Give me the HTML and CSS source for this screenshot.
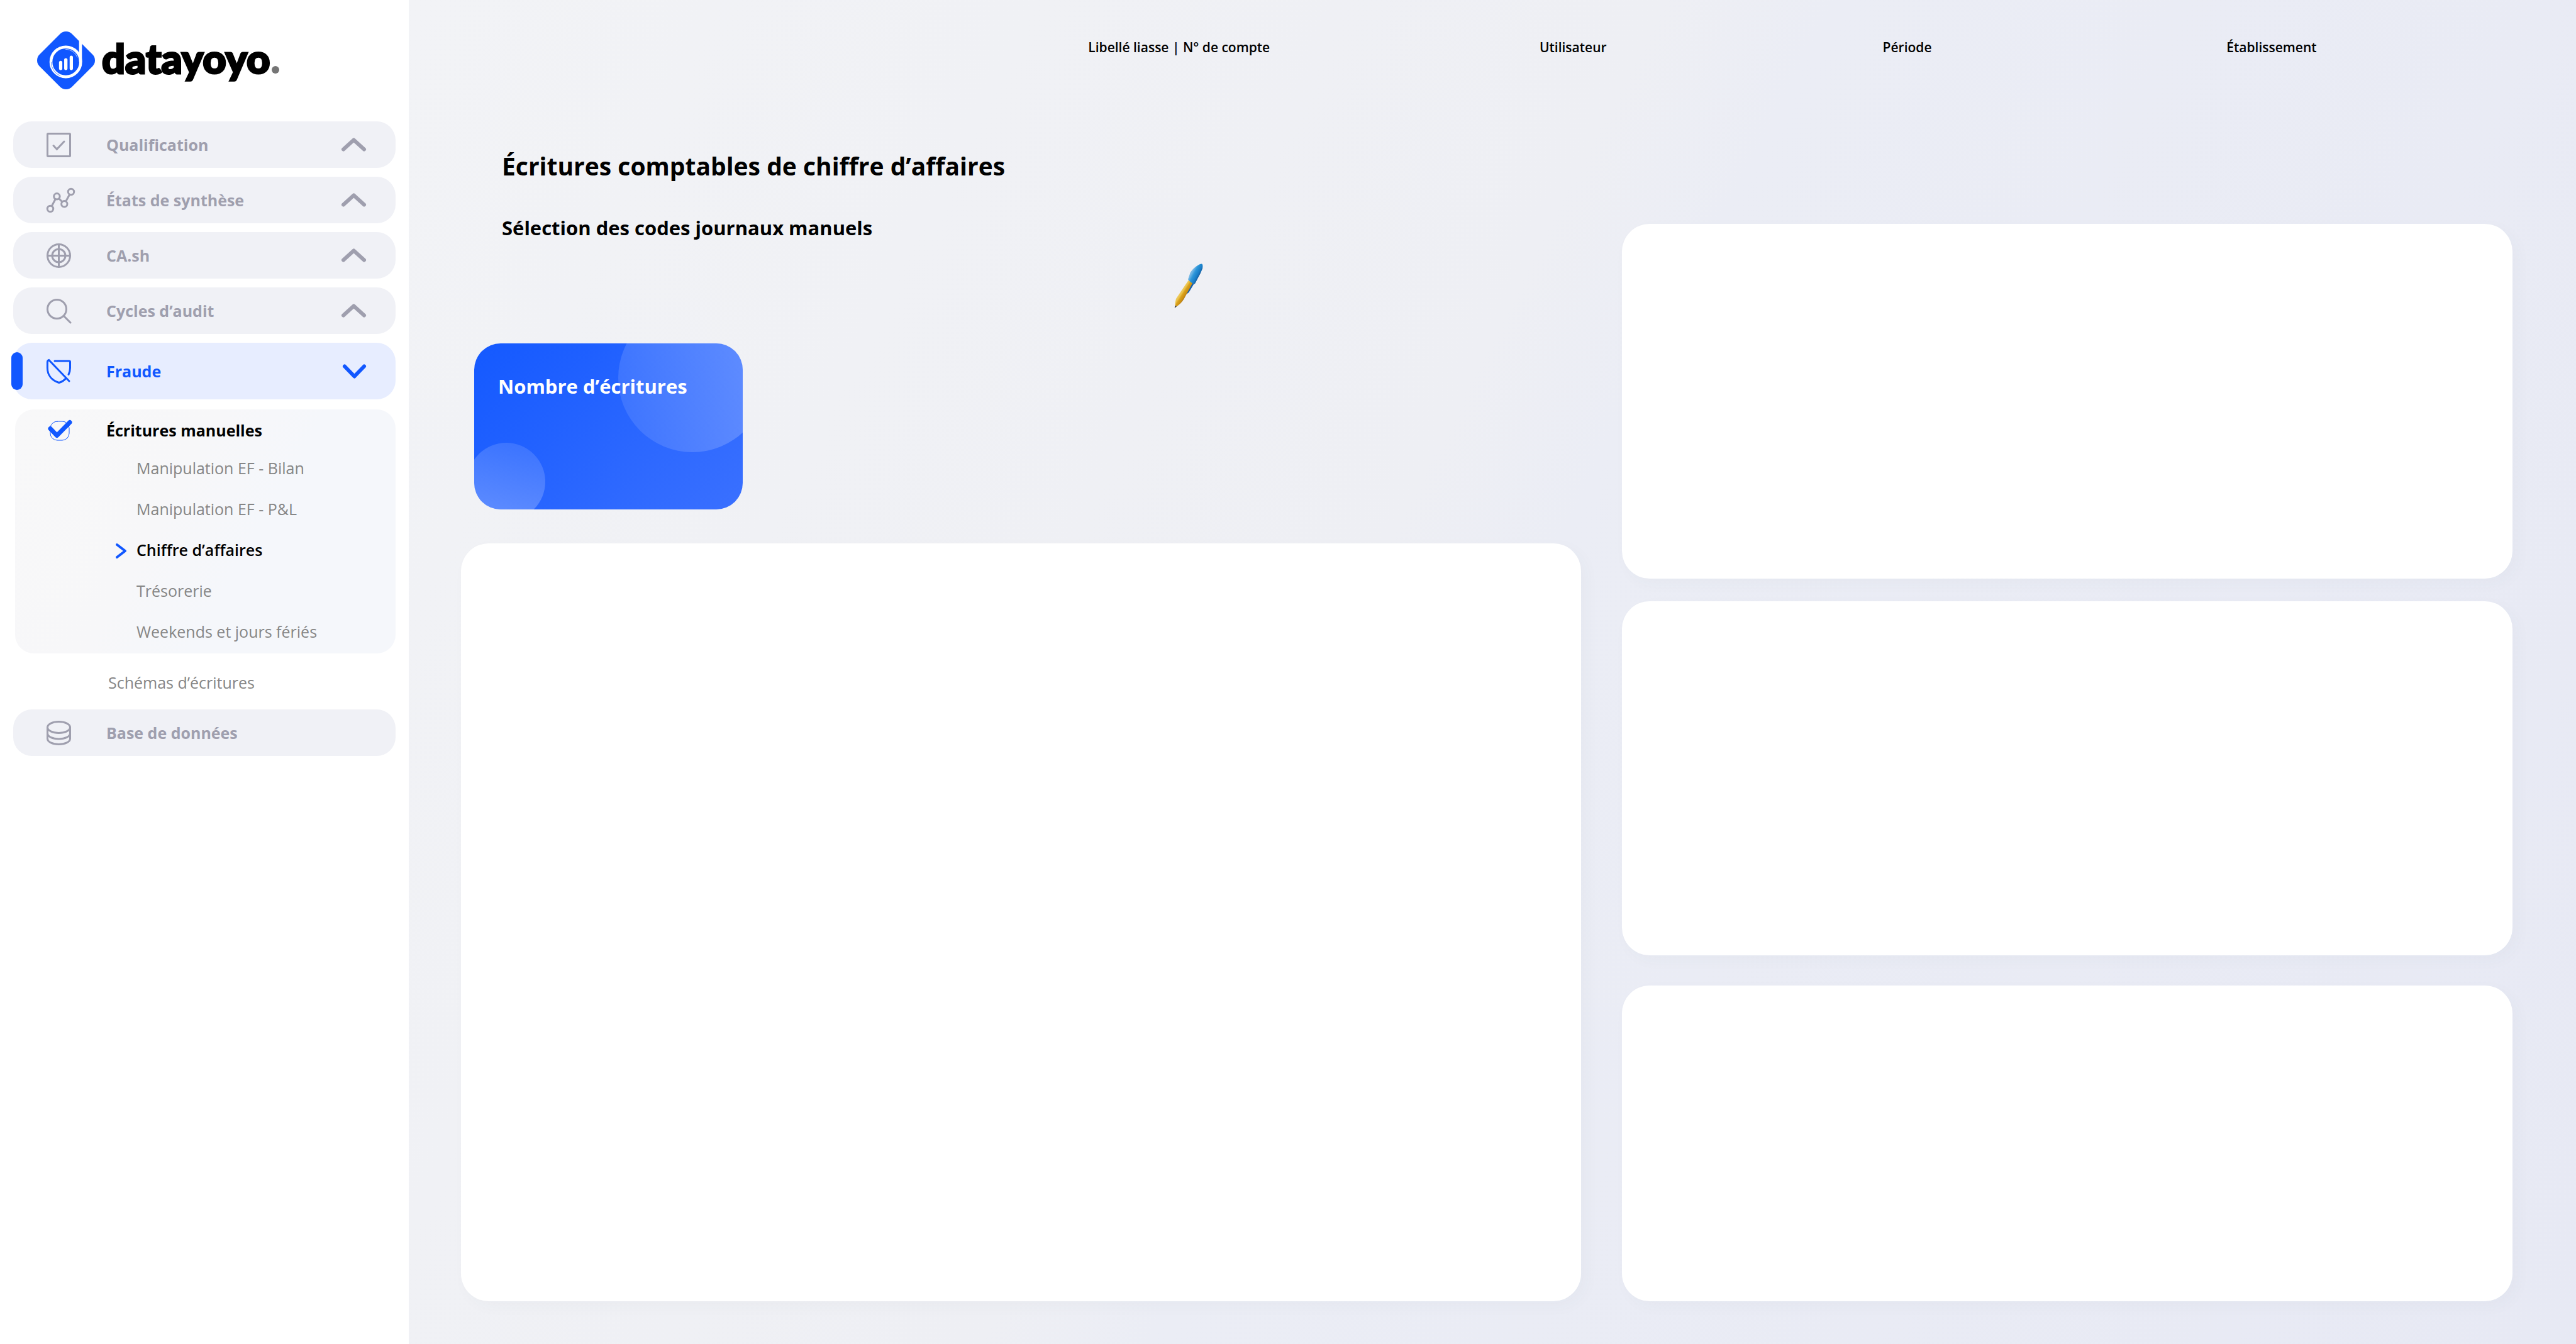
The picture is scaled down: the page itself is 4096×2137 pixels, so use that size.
FILE: index.html
```
<!DOCTYPE html>
<html lang="fr">
<head>
<meta charset="utf-8">
<title>Datayoyo – Écritures comptables de chiffre d’affaires</title>
<link rel="stylesheet" href="styles.css">
</head>
<body>
<div class="app">
  <aside class="sidebar">
    <a class="logo" href="#" aria-label="datayoyo">
      <svg class="logo-mark" viewBox="29 32 280 280" aria-hidden="true">
        <rect x="58" y="61" width="222" height="222" rx="41" fill="#1157ff" transform="rotate(45 169 172)"/>
        <path d="M232 40h14v140h-14z" fill="#fff"/>
        <circle cx="168" cy="179.500" r="72" fill="none" stroke="#fff" stroke-width="14"/>
        <path d="M97 180a73 73 0 0 0 44 67" fill="none" stroke="#1157ff" stroke-width="2"/>
        <path d="M166 118a62 62 0 0 1 58 40" fill="none" stroke="#fff" stroke-width="2"/>
        <path d="M143 182v29M168 169v42M194.500 157v54" stroke="#fff" stroke-width="16" stroke-linecap="round"/>
      </svg>
      <span class="logo-word">datayoyo</span><span class="logo-dot"></span>
    </a>
    <nav class="nav">
      <button class="nav-item" type="button">
        <svg class="icon" viewBox="0 0 39 39"><rect x="1.500" y="1.500" width="36" height="36" rx="1"/><path d="M11 20.500l5.400 5.700L28 14"/></svg>
        <span class="nav-label">Qualification</span>
        <svg class="chevron" viewBox="0 0 39 22"><path d="M3 18.500L19.500 3.500 36 18.500"/></svg>
      </button>
      <button class="nav-item" type="button">
        <svg class="icon" viewBox="0 0 39 39"><circle cx="6" cy="33" r="4.700"/><circle cx="16.400" cy="13.300" r="4.700"/><circle cx="28.300" cy="25.300" r="4.700"/><circle cx="39" cy="6" r="4.700"/><path d="M8.200 28.800l6-11.300M19.700 16.600l5.300 5.400M30.600 21.200l6.100-11"/></svg>
        <span class="nav-label">États de synthèse</span>
        <svg class="chevron" viewBox="0 0 39 22"><path d="M3 18.500L19.500 3.500 36 18.500"/></svg>
      </button>
      <button class="nav-item" type="button">
        <svg class="icon" viewBox="0 0 39 39"><circle cx="19.500" cy="19.500" r="18"/><circle cx="19.500" cy="19.500" r="10.500"/><path d="M19.500 1.500v36M1.500 19.500h36"/></svg>
        <span class="nav-label">CA.sh</span>
        <svg class="chevron" viewBox="0 0 39 22"><path d="M3 18.500L19.500 3.500 36 18.500"/></svg>
      </button>
      <button class="nav-item" type="button">
        <svg class="icon" viewBox="0 0 39 39"><circle cx="16.500" cy="16.500" r="15"/><path d="M27.300 27.300L38 38"/></svg>
        <span class="nav-label">Cycles d’audit</span>
        <svg class="chevron" viewBox="0 0 39 22"><path d="M3 18.500L19.500 3.500 36 18.500"/></svg>
      </button>
      <button class="nav-item nav-item-active" type="button" aria-expanded="true">
        <svg class="icon" viewBox="0 0 39 39"><path d="M36 35L3.800 1.500C2.400 2 1.400 3 1.400 5v9c0 12 7.600 20 18.400 23.500 5-1.500 8.700-4 11.400-7.500M13 3h23c1 0 1.500.5 1.500 1.500V14c0 4-1 7.500-2.500 10.500"/></svg>
        <span class="nav-label">Fraude</span>
        <svg class="chevron" viewBox="0 0 39 22"><path d="M5 3.500L20.500 19.500 36 3.500"/></svg>
      </button>
      <div class="submenu">
        <a class="submenu-head" href="#">
          <svg class="check" viewBox="0 0 39 39"><rect class="check-box" x="6" y="5" width="30" height="30" rx="11"/><path d="M6 16.500L16.500 27.500 37 6.500"/></svg>
          <span class="nav-label">Écritures manuelles</span>
        </a>
        <ul class="sublist">
          <li><a class="sublink" href="#">Manipulation EF - Bilan</a></li>
          <li><a class="sublink" href="#">Manipulation EF - P&amp;L</a></li>
          <li><a class="sublink sublink-current" href="#"><svg class="caret" viewBox="0 0 18 24"><path d="M2 2l13 10L2 22"/></svg>Chiffre d’affaires</a></li>
          <li><a class="sublink" href="#">Trésorerie</a></li>
          <li><a class="sublink" href="#">Weekends et jours fériés</a></li>
        </ul>
      </div>
      <a class="nav-link" href="#">Schémas d’écritures</a>
      <button class="nav-item" type="button">
        <svg class="icon" viewBox="0 0 39 39"><ellipse cx="19.500" cy="10.500" rx="18" ry="9"/><path d="M1.500 10.500v18c0 5 8 9 18 9s18-4 18-9v-18M1.500 20c0 5 8 9 18 9s18-4 18-9"/></svg>
        <span class="nav-label">Base de données</span>
      </button>
    </nav>
  </aside>
  <main class="main">
    <header class="filters">
      <span class="filter">Libellé liasse | N° de compte</span>
      <span class="filter">Utilisateur</span>
      <span class="filter">Période</span>
      <span class="filter">Établissement</span>
    </header>
    <div class="content">
      <section class="left">
        <h1 class="title">Écritures comptables de chiffre d’affaires</h1>
        <h2 class="subtitle">Sélection des codes journaux manuels</h2>
        <button class="edit" type="button" aria-label="Modifier la sélection">
          <svg class="pen" viewBox="0 0 138 219">
            <defs>
              <linearGradient id="wood" x1="30" y1="125" x2="66" y2="148" gradientUnits="userSpaceOnUse"><stop offset="0" stop-color="#f0d272"/><stop offset=".35" stop-color="#eac24a"/><stop offset=".5" stop-color="#d9a21c"/><stop offset=".8" stop-color="#c98c12"/><stop offset="1" stop-color="#7a4d10"/></linearGradient>
              <linearGradient id="cap" x1="84" y1="44" x2="122" y2="64" gradientUnits="userSpaceOnUse"><stop offset="0" stop-color="#74b6e4"/><stop offset=".3" stop-color="#2c96d9"/><stop offset=".7" stop-color="#187cc6"/><stop offset="1" stop-color="#14528f"/></linearGradient>
            </defs>
            <path d="M100 90L70 140 56 150 84 84z" fill="#145fae"/>
            <path d="M69 80L90 90 86 98 46 172Q32 194 14 206L4 208Q2 188 8 170z" fill="url(#wood)"/>
            <path d="M4 204L1 216 12 207z" fill="#3b3a42"/>
            <path d="M134 2Q139 6 136 24 128 46 113 72L99 99Q80 96 66 77L77 44Q90 22 114 8 128 0 134 2z" fill="url(#cap)"/>
          </svg>
        </button>
        <article class="kpi"><h3 class="kpi-title">Nombre d’écritures</h3></article>
        <section class="card card-main"></section>
      </section>
      <section class="right">
        <div class="card card-a"></div>
        <div class="card card-b"></div>
        <div class="card card-c"></div>
      </section>
    </div>
  </main>
</div>
</body>
</html>
```
FILE: styles.css
```
* { box-sizing: border-box; }

body {
  margin: 0;
  font-family: "Open Sans", "Noto Sans", sans-serif;
  font-size: 25px;
  line-height: 34px;
  color: #000;
}

button { font: inherit; color: inherit; border: 0; background: none; padding: 0; text-align: left; }
a { color: inherit; text-decoration: none; }
svg { display: block; flex: none; overflow: visible; }

.app { display: flex; min-height: 100vh; }

/* Sidebar */
.sidebar { flex: 0 0 650px; padding: 50px 21px 0; background: #fff; }

.logo { display: flex; align-items: flex-end; height: 92px; margin: 0 0 51px 38px; }
.logo-mark { width: 92px; height: 92px; margin-right: 11px; }
.logo-word {
  margin-bottom: 10px;
  font-family: Lato, sans-serif;
  font-size: 65px;
  font-weight: 900;
  line-height: 80px;
  -webkit-text-stroke: 3px #000;
}
.logo-dot { width: 12px; height: 12px; margin: 0 0 25px 2px; border-radius: 50%; background: #757575; }

.nav { display: flex; flex-direction: column; gap: 14px; }

.nav-item {
  position: relative;
  display: flex;
  align-items: center;
  height: 74px;
  padding: 0 47px 0 53px;
  border-radius: 30px;
  background: #f0f1f6;
  color: #9f9fae;
  font-weight: 700;
}
.nav-item-active { height: 90px; background: #e7edff; color: #1157ff; }
.nav-item-active::before {
  content: "";
  position: absolute;
  left: -3px;
  top: 15px;
  bottom: 15px;
  width: 18px;
  border-radius: 9px;
  background: #1157ff;
}

.icon, .check { width: 39px; height: 39px; margin-right: 56px; fill: none; stroke-linecap: round; }
.icon { stroke: currentColor; stroke-width: 3; }
.nav-label { flex: 1; }
.chevron { width: 39px; height: 22px; fill: none; stroke: currentColor; stroke-width: 6; stroke-linecap: round; stroke-linejoin: round; }

.submenu {
  margin: 2px 0 0 3px;
  padding: 16px 0 2px;
  border-radius: 30px;
  background: linear-gradient(120deg, #f8f8f9, #f7f7f9 40%, #f5f7fb 60%, #f5f7fb);
}
.submenu-head { display: flex; align-items: center; height: 34px; padding-left: 50px; font-weight: 700; }
.check { stroke: #1157ff; stroke-width: 7; stroke-linejoin: round; }
.check-box { stroke-width: 1; }

.sublist { margin: 11px 0 0; padding: 0; list-style: none; }
.sublink { position: relative; display: block; padding-left: 193px; line-height: 65px; color: #868686; }
.sublink-current { color: #000; font-weight: 600; }
.caret { position: absolute; left: 160px; top: 22px; width: 18px; height: 24px; fill: none; stroke: #1157ff; stroke-width: 4; stroke-linecap: round; stroke-linejoin: round; }

.nav-link { height: 61px; padding: 15px 0 0 151px; color: #868686; }

/* Main area */
.main {
  flex: 1;
  display: flex;
  flex-direction: column;
  padding: 61px 0 68px;
  background: linear-gradient(117deg, #f2f3f6, #eeeff4 44%, #ebedf5 50%, #e7e9f4);
}

.filters {
  display: grid;
  grid-template-columns: 718fr 546fr 547fr 556fr;
  height: 28px;
  padding-left: 31.350%;
  font-size: 21px;
  font-weight: 600;
  line-height: 28px;
}

.content {
  flex: 1;
  display: grid;
  grid-template-columns: 1781fr 1416fr;
  column-gap: 65px;
  padding: 146px 101px 0 83px;
}

.left, .right { display: flex; flex-direction: column; }
.title, .subtitle, .kpi-title { margin: 0; font-weight: 700; }
.title { padding-left: 65px; font-size: 39px; line-height: 58px; }
.subtitle { margin-top: 47px; padding-left: 65px; font-size: 31px; line-height: 44px; }

.edit { width: 46px; height: 72px; margin: 35px 0 0 63.700%; }
.pen { width: 46px; height: 72px; }

.kpi {
  position: relative;
  overflow: hidden;
  width: 427px;
  height: 264px;
  margin: 55px 0 54px 21px;
  padding: 46px 38px;
  border-radius: 42px;
  background: linear-gradient(135deg, #1459ff, #3a70ff);
  color: #fff;
}
.kpi::before, .kpi::after { content: ""; position: absolute; border-radius: 50%; }
.kpi::before {
  left: 229px;
  top: -63px;
  width: 236px;
  height: 236px;
  background: linear-gradient(60deg, rgba(255, 255, 255, .1) 10%, rgba(255, 255, 255, .26) 90%);
}
.kpi::after {
  left: -11px;
  top: 158px;
  width: 124px;
  height: 124px;
  background: linear-gradient(200deg, rgba(255, 255, 255, .12) 10%, rgba(255, 255, 255, .27) 90%);
}
.kpi-title { position: relative; z-index: 1; font-size: 31px; line-height: 44px; }

.card { border-radius: 44px; background: #fff; box-shadow: 8px 8px 24px rgba(60, 80, 80, .03); }
.card-main { flex: 1; }

.right { padding-top: 121px; }
.card-a { flex: 564; }
.card-b { flex: 563; margin: 36px 0 48px; }
.card-c { flex: 502; }
```
